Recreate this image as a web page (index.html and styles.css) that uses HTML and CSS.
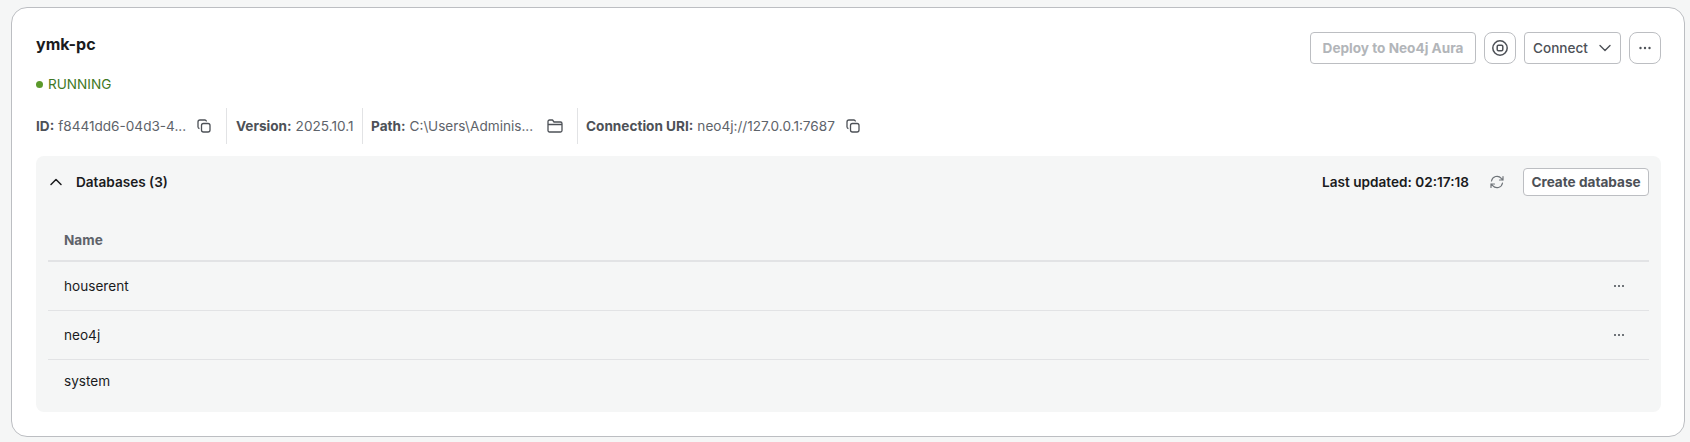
FILE: index.html
```html
<!DOCTYPE html>
<html>
<head>
  <title>Local instances</title>
  <link rel="stylesheet" href="styles.css">
</head>
<body>
  <div class="card">
    <div class="card-top">
      <h1>ymk-pc</h1>
      <div class="actions">
        <button class="btn btn-deploy" type="button">Deploy to Neo4j Aura</button>
        <button class="btn btn-icon" type="button">
          <svg width="20" height="20" viewBox="0 0 20 20" fill="none" stroke="#4d5157" stroke-width="1.5"><circle cx="10" cy="10" r="7.2"/><rect x="7.2" y="7.2" width="5.6" height="5.6" rx="1.2"/></svg>
        </button>
        <button class="btn btn-connect" type="button">Connect
          <svg width="14" height="14" viewBox="0 0 14 14" fill="none" stroke="#4d5157" stroke-width="1.4" stroke-linecap="round" stroke-linejoin="round"><path d="M2 4.5 7 9.5 12 4.5"/></svg>
        </button>
        <button class="btn btn-icon" type="button">
          <svg width="14" height="4" viewBox="0 0 14 4" fill="#4d5157"><circle cx="2.5" cy="2" r="1.2"/><circle cx="7" cy="2" r="1.2"/><circle cx="11.500" cy="2" r="1.2"/></svg>
        </button>
      </div>
    </div>

    <div class="status"><span class="dot"></span>RUNNING</div>

    <div class="meta">
      <div class="meta-item meta-id"><b>ID:</b> <span>f8441dd6-04d3-4...</span>
        <svg class="meta-icon" width="14" height="14" viewBox="0 0 14 14" fill="none" stroke="#4d5157" stroke-width="1.3"><rect x="4.500" y="4.500" width="8.500" height="8.500" rx="2"/><path d="M9.500 2.500A1.800 1.800 0 0 0 8 1H3A2 2 0 0 0 1 3V8A1.800 1.800 0 0 0 2.500 9.500"/></svg>
      </div>
      <div class="meta-item meta-version"><b>Version:</b> <span>2025.10.1</span></div>
      <div class="meta-item meta-path"><b>Path:</b> <span>C:\Users\Adminis...</span>
        <svg class="meta-icon meta-icon-folder" width="16" height="14" viewBox="0 0 16 14" fill="none" stroke="#4d5157" stroke-width="1.3" stroke-linejoin="round"><path d="M1 4V2.500A1.500 1.500 0 0 1 2.500 1H5.500L7 3H13.500A1.500 1.500 0 0 1 15 4.500V11.500A1.500 1.500 0 0 1 13.500 13H2.500A1.500 1.500 0 0 1 1 11.500V4ZM1 5.500H15"/></svg>
      </div>
      <div class="meta-item meta-uri"><b>Connection URI:</b> <span>neo4j://127.0.0.1:7687</span>
        <svg class="meta-icon" width="14" height="14" viewBox="0 0 14 14" fill="none" stroke="#4d5157" stroke-width="1.3"><rect x="4.500" y="4.500" width="8.500" height="8.500" rx="2"/><path d="M9.500 2.500A1.800 1.800 0 0 0 8 1H3A2 2 0 0 0 1 3V8A1.800 1.800 0 0 0 2.500 9.500"/></svg>
      </div>
    </div>

    <div class="panel">
      <div class="panel-head">
        <svg class="chevron" width="14" height="14" viewBox="0 0 14 14" fill="none" stroke="#1a1b1d" stroke-width="1.5" stroke-linecap="round" stroke-linejoin="round"><path d="M2 9.500 7 4.500 12 9.500"/></svg>
        <span class="panel-title">Databases (3)</span>
        <span class="updated">Last updated: 02:17:18</span>
        <svg class="refresh" width="16" height="16" viewBox="0 0 16 16" fill="none" stroke="#6f7479" stroke-width="1.2" stroke-linecap="round" stroke-linejoin="round"><path d="M2.500 7A5.600 5.600 0 0 1 12.300 4.300L14 6M14 2.500V6H10.500"/><path d="M13.500 9A5.600 5.600 0 0 1 3.700 11.700L2 10M2 13.500V10H5.500"/></svg>
        <button class="btn btn-create" type="button">Create database</button>
      </div>

      <table class="db-table">
        <tr><th>Name</th><th></th></tr>
        <tr class="row-a"><td>houserent</td><td class="cell-more"><span class="more"></span></td></tr>
        <tr class="row-b"><td>neo4j</td><td class="cell-more"><span class="more"></span></td></tr>
        <tr class="row-c"><td>system</td><td></td></tr>
      </table>
    </div>
  </div>
</body>
</html>
```

FILE: styles.css
```css
html, body {
  height: 100%;
}

body {
  margin: 0;
  padding: 7px 5px 5px 11px;
  box-sizing: border-box;
  background-color: #f5f6f6;
  font-family: Inter, "Liberation Sans", sans-serif;
  font-size: 13.6px;
  color: #1a1b1d;
}

.card {
  height: 430px;
  box-sizing: border-box;
  background-color: #fff;
  border: 1px solid #bcbec2;
  border-radius: 16px;
  padding: 24px 23px 24px 24px;
}

.card-top {
  display: flex;
  justify-content: space-between;
  align-items: flex-start;
  height: 32px;
}

h1 {
  margin: 0;
  font-size: 16px;
  font-weight: 700;
  line-height: 24px;
}

.actions {
  display: flex;
  gap: 8px;
}

.btn {
  font-family: inherit;
  font-size: 13.6px;
  font-weight: 700;
  height: 32px;
  box-sizing: border-box;
  background-color: #fff;
  border: 1px solid #bcbec2;
  border-radius: 4px;
  color: #4d5157;
  padding: 0;
  display: flex;
  align-items: center;
  justify-content: center;
}

.btn-deploy {
  width: 166px;
  color: #b2b5b9;
}

.btn-icon {
  width: 32px;
  border-radius: 8px;
}

.btn-connect {
  width: 97px;
  gap: 10px;
  font-weight: 500;
}

.status {
  display: flex;
  align-items: center;
  height: 20px;
  margin-top: 10px;
  color: #3f7824;
}

.dot {
  width: 7px;
  height: 7px;
  border-radius: 50%;
  background-color: #5b992b;
  margin-right: 5px;
}

.meta {
  display: flex;
  height: 36px;
  margin-top: 14px;
  color: #5e636a;
}

.meta-item {
  display: flex;
  align-items: center;
  gap: 4px;
  box-sizing: border-box;
  white-space: pre;
  border-right: 1px solid #e2e3e5;
}

.meta-item b {
  color: #4d5157;
  font-weight: 700;
}

.meta-id {
  width: 191px;
}

.meta-version {
  width: 136px;
  padding-left: 9px;
}

.meta-path {
  width: 215px;
  padding-left: 8px;
}

.meta-uri {
  padding-left: 8px;
  border-right: none;
}

.meta-icon {
  margin-left: 7px;
}

.meta-icon-folder {
  margin-left: 10px;
}

.panel {
  height: 256px;
  box-sizing: border-box;
  margin-top: 12px;
  background-color: #f5f6f6;
  border-radius: 8px;
  padding: 12px;
}

.panel-head {
  display: flex;
  align-items: center;
  height: 28px;
}

.chevron {
  margin: 0 13px 0 1px;
}

.panel-title {
  flex: 1;
  font-weight: 600;
}

.updated {
  font-weight: 600;
  margin-right: 20px;
}

.refresh {
  margin-right: 18px;
}

.btn-create {
  width: 126px;
  height: 28px;
}

.db-table {
  width: 100%;
  border-collapse: collapse;
  margin-top: 8px;
}

.db-table th {
  height: 57px;
  padding: 16px 16px 0;
  box-sizing: border-box;
  text-align: left;
  color: #5e636a;
  font-weight: 700;
  border-bottom: 2px solid #e2e3e5;
}

.db-table td {
  padding: 0 16px;
  font-weight: 400;
}

.row-a td, .row-b td {
  height: 48px;
  border-bottom: 1px solid #e2e3e5;
}

.row-c td {
  height: 41px;
}

.cell-more {
  width: 30px;
}

.more {
  display: block;
  width: 2px;
  height: 2px;
  margin-left: 11px;
  background-color: #6f7479;
  box-shadow: 4px 0 0 #6f7479, 8px 0 0 #6f7479;
}
```
